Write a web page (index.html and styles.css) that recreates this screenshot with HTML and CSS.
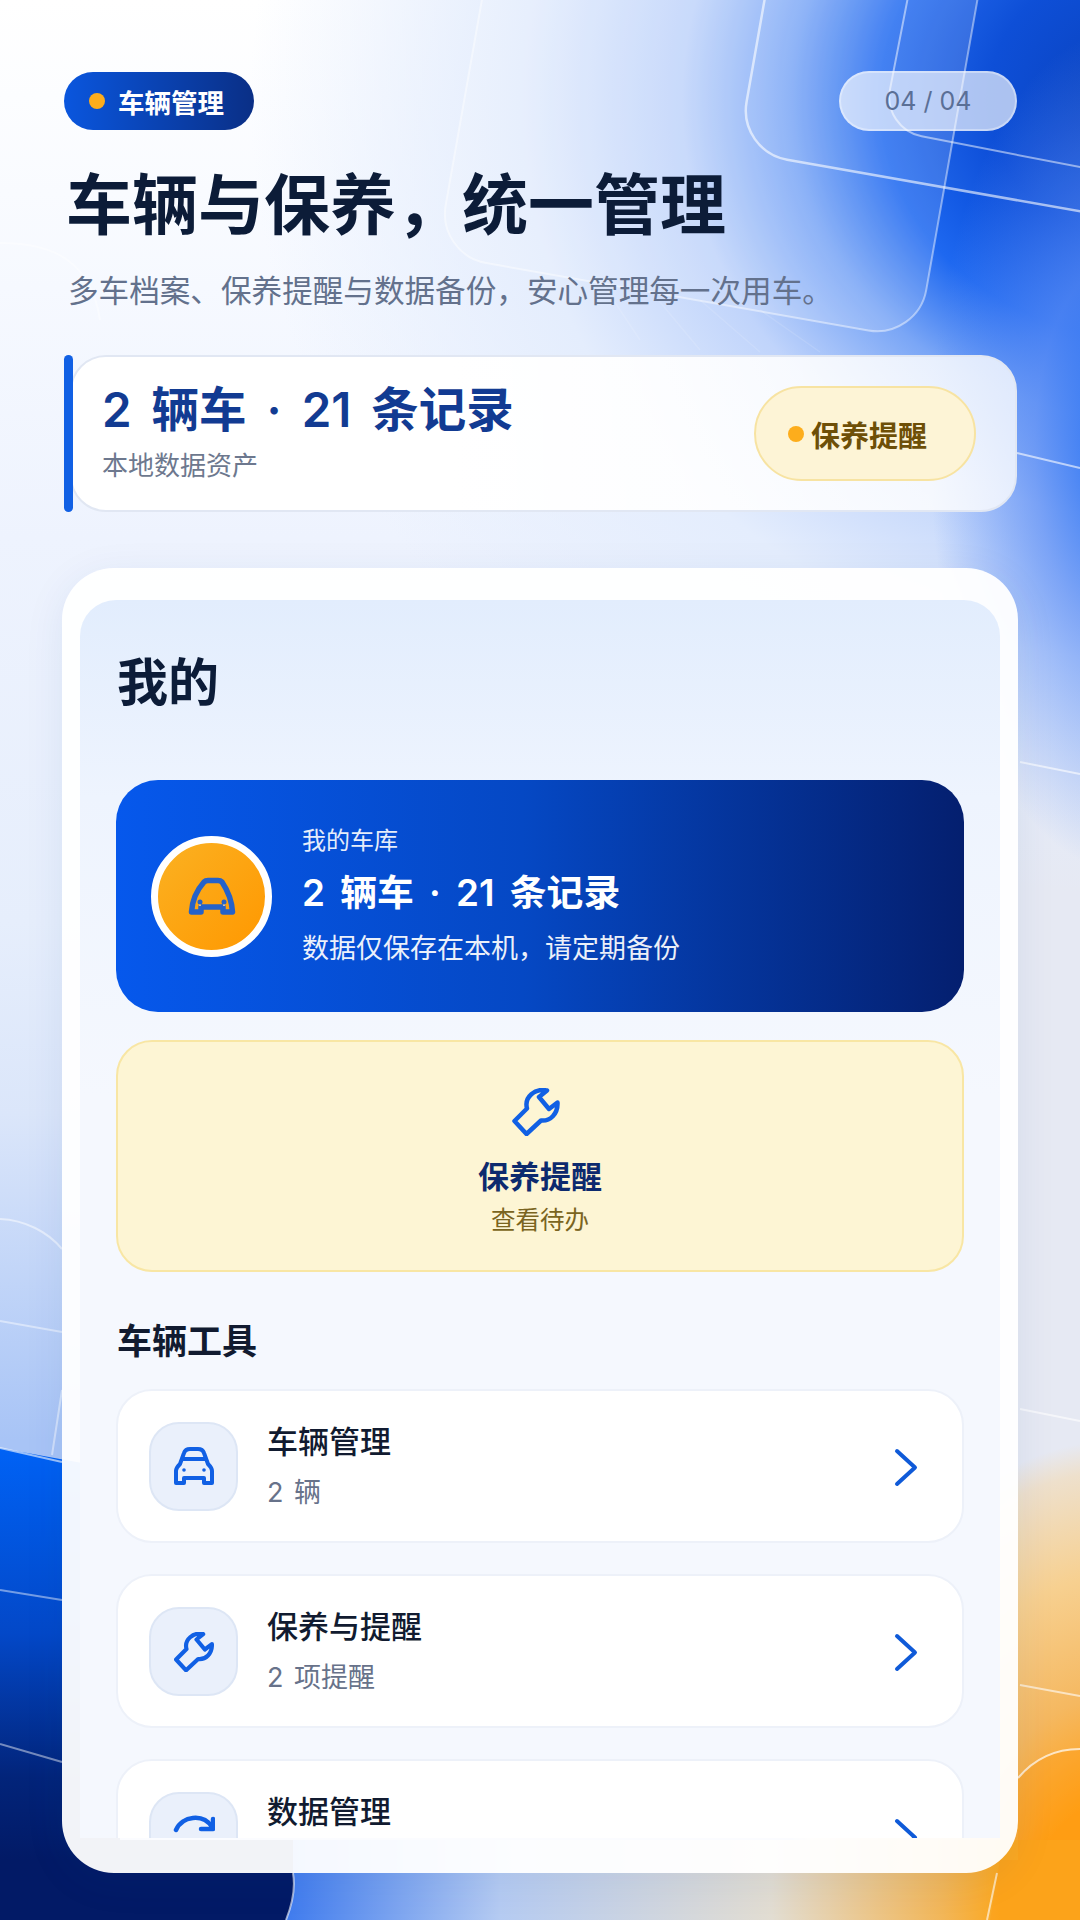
FILE: index.html
```html
<!DOCTYPE html>
<html lang="en">
<head>
    <meta charset="UTF-8">
    <meta name="viewport" content="width=device-width, initial-scale=1.0">
    <title>车辆与保养</title>
    <link rel="stylesheet" href="styles.css">
</head>
<body>
    <div class="page">
        <!-- decorative glass outlines behind everything -->
        <svg class="backdrop" width="1080" height="1920" viewBox="0 0 1080 1920" fill="none">
            <defs>
                <linearGradient id="navy" x1="0" y1="1448" x2="0" y2="1860" gradientUnits="userSpaceOnUse">
                    <stop offset="0" stop-color="#0062f5" />
                    <stop offset=".45" stop-color="#0348c8" />
                    <stop offset=".8" stop-color="#02247a" />
                    <stop offset="1" stop-color="#021a66" />
                </linearGradient>
                <linearGradient id="floor" x1="286" y1="0" x2="1000" y2="0" gradientUnits="userSpaceOnUse">
                    <stop offset="0" stop-color="#3f7bee" />
                    <stop offset=".3" stop-color="#b5cbf2" />
                    <stop offset=".68" stop-color="#e2ddd2" />
                    <stop offset=".92" stop-color="#f2b658" />
                    <stop offset="1" stop-color="#fba820" />
                </linearGradient>
            </defs>
            <rect x="280" y="1840" width="800" height="80" fill="url(#floor)" />
            <path d="M0 1448 L120 1470 V1840 H293 V1873 C296 1890 292 1905 286 1920 H0 Z" fill="url(#navy)" />
            <path d="M1080 1920 H990 L1000 1860 H1018 V1778 C1035 1758 1055 1749 1080 1749 Z" fill="#ff9c10" fill-opacity=".35" />
            <rect x="482" y="-260" width="488" height="560" rx="50" transform="rotate(10 720 20)" fill="#fff" fill-opacity=".14" stroke="#fff" stroke-opacity=".45" stroke-width="2" />
            <rect x="782" y="-300" width="428" height="493" rx="50" transform="rotate(10 1000 -80)" fill="#fff" fill-opacity=".03" stroke="#fff" stroke-opacity=".6" stroke-width="2.500" />
            <rect x="930" y="-300" width="380" height="466" rx="40" transform="rotate(11 1100 -100)" fill="#fff" fill-opacity=".01" stroke="#fff" stroke-opacity=".5" stroke-width="2" />
            <path d="M600 280 L640 340 M650 290 L700 350 M700 300 L760 352 M760 310 L820 352" stroke="#fff" stroke-opacity=".12" stroke-width="1.500" />
            <path d="M0 243 C40 243 90 252 100 320" stroke="#fff" stroke-opacity=".4" stroke-width="2" />
            <path d="M0 1219 C25 1220 48 1232 62 1249" stroke="#fff" stroke-opacity=".5" stroke-width="2" />
            <path d="M0 1321 L62 1332 M0 1590 L62 1600 M0 1744 L62 1762 M62 1390 L52 1455" stroke="#fff" stroke-opacity=".45" stroke-width="2" />
            <path d="M0 1448 L62 1462" stroke="#fff" stroke-opacity=".6" stroke-width="2" />
            <path d="M1017 453 L1080 468 M1020 762 L1080 774 M1020 1409 L1080 1421 M1020 1685 L1080 1696" stroke="#fff" stroke-opacity=".6" stroke-width="2" />
            <path d="M1018 1778 C1035 1758 1055 1749 1080 1749" stroke="#fff" stroke-opacity=".7" stroke-width="2" />
            <path d="M997 1873 L987 1920 M293 1873 C296 1890 292 1905 286 1920" stroke="#fff" stroke-opacity=".6" stroke-width="2" />
        </svg>

        <header class="top-row">
            <div class="tag"><span class="dot"></span>车辆管理</div>
            <div class="pager">04 / 04</div>
        </header>

        <h1 class="headline">车辆与保养&#65292;统一管理</h1>
        <p class="subline">多车档案、保养提醒与数据备份&#65292;安心管理每一次用车。</p>

        <section class="stats">
            <div class="stats-bar"></div>
            <div class="stats-body">
                <div>
                    <div class="stats-title">2 辆车 · 21 条记录</div>
                    <div class="stats-note">本地数据资产</div>
                </div>
                <div class="remind-chip"><span class="dot"></span>保养提醒</div>
            </div>
        </section>

        <section class="phone">
            <div class="phone-inner">
                <h2 class="screen-title">我的</h2>

                <div class="garage">
                    <div class="garage-avatar">
                        <svg width="48" height="39" viewBox="0 0 48 39" fill="none" stroke="#2562c9" stroke-width="5.500" stroke-linejoin="round">
                            <path d="M3.500 35 C4 26 8 14 16 5 C17 4 18 3.500 20 3.500 H30 C32 3.500 33 4 34 5 C40 14 44 26 44.500 35 H35 V30 H13 V35 Z" />
                            <path d="M12 26 V29 M36 26 V29" stroke="#ffdca6" stroke-width="1.500" />
                            <circle cx="12" cy="25" r="2.500" fill="#2562c9" stroke="none" />
                            <circle cx="36" cy="25" r="2.500" fill="#2562c9" stroke="none" />
                        </svg>
                    </div>
                    <div>
                        <div class="garage-label">我的车库</div>
                        <div class="garage-title">2 辆车 · 21 条记录</div>
                        <div class="garage-note">数据仅保存在本机&#65292;请定期备份</div>
                    </div>
                </div>

                <div class="reminder">
                    <svg class="reminder-icon" width="48" height="48" viewBox="0 0 48 48" fill="none" stroke="#1160e4" stroke-width="4.500" stroke-linejoin="round">
                        <path d="M2.500 33 L14.500 46 L29 32.500 C38 33.500 46 26 45.500 14.500 L37 21 L27 9 L35 2.500 C23 0 12 9 15 20.500 Z" />
                    </svg>
                    <div class="reminder-title">保养提醒</div>
                    <div class="reminder-note">查看待办</div>
                </div>

                <h3 class="section-title">车辆工具</h3>

                <div class="tool-list">
                    <div class="tool-row">
                        <div class="tool-icon">
                            <svg width="42" height="39" viewBox="0 0 42 39" fill="none" stroke="#1160e4" stroke-width="4" stroke-linejoin="round">
                                <path d="M3 36 V24 C3 21 5 19 7 17 L11 6 C12 3 14 2 17 2 H25 C28 2 30 3 31 6 L35 17 C37 19 39 21 39 24 V36 H31 V31 H11 V36 Z" />
                                <path d="M9 12 H33" />
                                <circle cx="11" cy="23" r="1.800" fill="#1160e4" stroke="none" />
                                <circle cx="31" cy="23" r="1.800" fill="#1160e4" stroke="none" />
                            </svg>
                        </div>
                        <div class="tool-text">
                            <div class="tool-name">车辆管理</div>
                            <div class="tool-note">2 辆</div>
                        </div>
                        <svg class="chevron" width="24" height="39" viewBox="0 0 24 39" fill="none" stroke="#0f5ad8" stroke-width="4" stroke-linecap="round" stroke-linejoin="round">
                            <path d="M3 3 L21 19.500 L3 36" />
                        </svg>
                    </div>
                    <div class="tool-row">
                        <div class="tool-icon">
                            <svg width="40" height="40" viewBox="0 0 48 48" fill="none" stroke="#1160e4" stroke-width="5" stroke-linejoin="round">
                                <path d="M2.500 33 L14.500 46 L29 32.500 C38 33.500 46 26 45.500 14.500 L37 21 L27 9 L35 2.500 C23 0 12 9 15 20.500 Z" />
                            </svg>
                        </div>
                        <div class="tool-text">
                            <div class="tool-name">保养与提醒</div>
                            <div class="tool-note">2 项提醒</div>
                        </div>
                        <svg class="chevron" width="24" height="39" viewBox="0 0 24 39" fill="none" stroke="#0f5ad8" stroke-width="4" stroke-linecap="round" stroke-linejoin="round">
                            <path d="M3 3 L21 19.500 L3 36" />
                        </svg>
                    </div>
                    <div class="tool-row">
                        <div class="tool-icon">
                            <svg width="42" height="48" viewBox="0 0 42 48" fill="none" stroke="#1160e4" stroke-width="4.500" stroke-linecap="round" stroke-linejoin="round">
                                <path d="M3 17 C9 3 30 0 39 14" />
                                <path d="M40 6 V16 H28" />
                            </svg>
                        </div>
                        <div class="tool-text">
                            <div class="tool-name">数据管理</div>
                        </div>
                        <svg class="chevron" width="24" height="39" viewBox="0 0 24 39" fill="none" stroke="#0f5ad8" stroke-width="4" stroke-linecap="round" stroke-linejoin="round">
                            <path d="M3 3 L21 19.500 L3 36" />
                        </svg>
                    </div>
                </div>
            </div>
        </section>
    </div>
</body>
</html>
```

FILE: styles.css
```css
* {
    box-sizing: border-box;
}

body {
    margin: 0;
    font-family: Inter, "Noto Sans CJK SC", sans-serif;
}

.page {
    position: relative;
    width: 1080px;
    height: 1920px;
    overflow: hidden;
    padding: 71px 63px 47px 64px;
    display: flex;
    flex-direction: column;
    background:
        radial-gradient(340px 520px at 1120px 1960px, #ff9c10 0%, #ff9f15 31%, #f5b860 51%, #f7d090 74%, #eee0cc 94%, rgba(238, 224, 204, 0) 100%),
        radial-gradient(190px 420px at 1120px 450px, #2a72f2 0%, rgba(90, 140, 244, .7) 45%, rgba(140, 175, 248, 0) 100%),
        radial-gradient(900px 800px at 1150px 100px, #0038b8 0%, #0548d6 18%, #1e68f0 30%, #7aa6f6 40%, #c0d4fb 52%, #e4edfd 70%, rgba(228, 237, 253, 0) 100%),
        linear-gradient(90deg, rgba(230, 233, 243, 0) 900px, #e6e9f3 1010px),
        linear-gradient(180deg, #fff 0%, #f6f9ff 15%, #eef3fe 28%, #e6eefc 48%, #dbe6fa 58%, #a8c4f6 75%, #a8c4f6 100%);
}

.backdrop {
    position: absolute;
    top: 0;
    left: 0;
}

.top-row,
.headline,
.subline,
.stats,
.phone {
    position: relative;
}

.top-row {
    display: flex;
    justify-content: space-between;
    align-items: center;
    height: 60px;
}

.dot {
    display: inline-block;
    width: 16px;
    height: 16px;
    border-radius: 50%;
    background: #fdad1c;
}

.tag {
    display: flex;
    align-items: center;
    gap: 13px;
    width: 190px;
    height: 58px;
    padding-left: 25px;
    border-radius: 29px;
    background: linear-gradient(90deg, #0a56de, #0a2f86);
    color: #fff;
    font-size: 26.500px;
    font-weight: 600;
}

.pager {
    width: 178px;
    height: 60px;
    border-radius: 30px;
    border: 2px solid rgba(255, 255, 255, .35);
    background: rgba(255, 255, 255, .66);
    color: #5a6f96;
    font-size: 25px;
    text-align: center;
    line-height: 56px;
}

.headline {
    margin: 34px 0 0 2px;
    color: #0c1c38;
    font-size: 66px;
    font-weight: 700;
    line-height: 80px;
}

.subline {
    margin: 24px 0 0 4px;
    color: #63718c;
    font-size: 30.600px;
    line-height: 44px;
}

.stats {
    display: flex;
    height: 157px;
    margin-top: 42px;
}

.stats-bar {
    width: 9px;
    margin-right: -3px;
    border-radius: 5px;
    background: #1160e4;
    z-index: 1;
}

.stats-body {
    flex: 1;
    display: flex;
    justify-content: space-between;
    align-items: center;
    padding: 0 39px 0 30px;
    border: 2px solid #e1e7f3;
    border-radius: 36px;
    background: linear-gradient(90deg, #fff 40%, rgba(255, 255, 255, .8));
}

.stats-title {
    margin-top: -4px;
    color: #123b92;
    font-size: 47.500px;
    font-weight: 600;
    line-height: 60px;
    word-spacing: 8px;
}

.stats-note {
    margin-top: 8px;
    color: #6d788e;
    font-size: 26px;
    line-height: 36px;
}

.remind-chip {
    display: flex;
    align-items: center;
    gap: 7px;
    width: 222px;
    height: 95px;
    padding-left: 32px;
    border: 2px solid #f7e3a2;
    border-radius: 48px;
    background: #fdf4d6;
    color: #6e4f07;
    font-size: 29px;
    font-weight: 600;
}

.phone {
    flex: 1;
    min-height: 0;
    margin: 56px -1px 0 -2px;
    padding: 32px 18px 35px;
    border-radius: 52px;
    background: rgba(255, 255, 255, .95);
    box-shadow: 0 8px 40px rgba(30, 60, 140, .08);
}

.phone-inner {
    height: 100%;
    overflow: hidden;
    padding: 0 36px;
    border-radius: 36px 36px 0 0;
    background: linear-gradient(180deg, #e2edfd 0%, #eef4fe 16%, #f5f8fe 40%);
}

.screen-title {
    margin: 49px 0 0 1px;
    color: #0c1c38;
    font-size: 51px;
    font-weight: 600;
    line-height: 68px;
}

.garage {
    display: flex;
    align-items: center;
    gap: 30px;
    height: 232px;
    margin-top: 63px;
    padding: 0 35px;
    border-radius: 42px;
    background: linear-gradient(90deg, #0658ec 0%, #0548c4 48%, #041f6f 100%);
    color: #fff;
}

.garage-avatar {
    display: flex;
    justify-content: center;
    align-items: center;
    width: 121px;
    height: 121px;
    border: 7px solid #fff;
    border-radius: 50%;
    background: linear-gradient(135deg, #fbb122, #ff9800);
}

.garage-label {
    font-size: 24px;
    line-height: 34px;
    opacity: .9;
}

.garage-title {
    margin-top: 10px;
    font-size: 36.800px;
    font-weight: 600;
    line-height: 50px;
    word-spacing: 6px;
}

.garage-note {
    margin-top: 12px;
    font-size: 27px;
    line-height: 38px;
    opacity: .92;
}

.reminder {
    display: flex;
    flex-direction: column;
    align-items: center;
    height: 232px;
    margin-top: 28px;
    padding-top: 46px;
    border: 2.500px solid #f8e6a4;
    border-radius: 36px;
    background: #fdf5d4;
}

.reminder-icon {
    margin-left: -8px;
}

.reminder-title {
    margin-top: 19px;
    color: #0d2a6e;
    font-size: 31px;
    font-weight: 600;
    line-height: 44px;
}

.reminder-note {
    margin-top: 4px;
    color: #7a6420;
    font-size: 24.500px;
    line-height: 34px;
}

.section-title {
    margin: 46px 0 0 1px;
    color: #111b30;
    font-size: 35px;
    font-weight: 600;
    line-height: 46px;
}

.tool-list {
    display: flex;
    flex-direction: column;
    gap: 31px;
    margin-top: 25px;
}

.tool-row {
    display: flex;
    align-items: flex-start;
    flex-shrink: 0;
    height: 154px;
    padding: 31px 44px 0 31px;
    border: 2px solid #edf1f9;
    border-radius: 36px;
    background: #fff;
}

.tool-icon {
    display: flex;
    justify-content: center;
    align-items: center;
    flex-shrink: 0;
    width: 89px;
    height: 89px;
    border: 2px solid #dde6f5;
    border-radius: 30px;
    background: #eaf0fb;
}

.tool-text {
    flex: 1;
    margin-left: 29px;
}

.tool-name {
    margin-top: -2px;
    color: #111b30;
    font-size: 31px;
    font-weight: 500;
    line-height: 44px;
}

.tool-note {
    margin-top: 10px;
    color: #67728a;
    font-size: 27px;
    line-height: 38px;
    word-spacing: 3px;
}

.chevron {
    margin-top: 26px;
}
```
